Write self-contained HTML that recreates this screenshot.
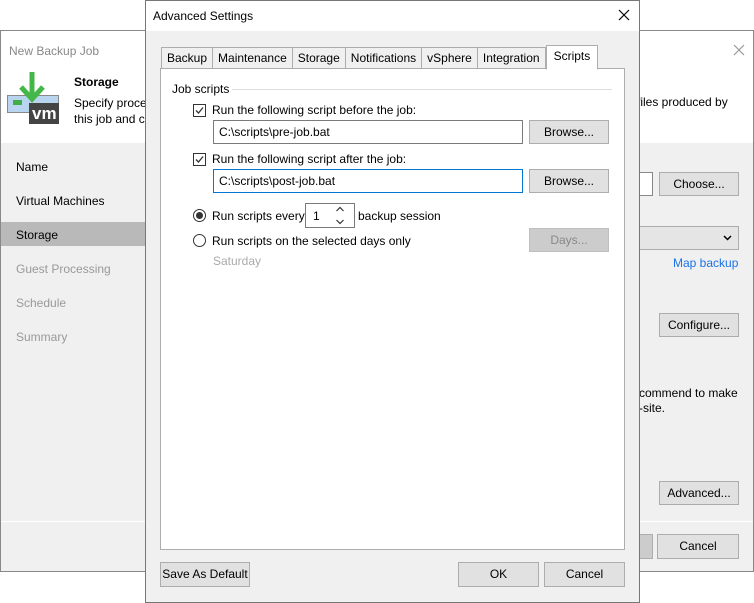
<!DOCTYPE html>
<html><head><style>
*{box-sizing:border-box;margin:0;padding:0}
body{width:754px;height:603px;background:#fff;font-family:"Liberation Sans",sans-serif;font-size:12px;color:#000;position:relative;overflow:hidden}
.a{position:absolute}
.btn{position:absolute;background:#e1e1e1;border:1px solid #adadad;text-align:center;line-height:23px;font-size:12px}
.gray{color:#999}
</style></head><body>
<!-- background window -->
<div class="a" style="left:0;top:30px;width:754px;height:542px;border:1px solid #888;background:#f0f0f0"></div>
<div class="a" style="left:1px;top:31px;width:752px;height:112px;background:#fff"></div>
<div class="a gray" style="left:9px;top:44px;font-size:12px;color:#888">New Backup Job</div>
<svg class="a" style="left:733px;top:44px" width="12" height="12"><path d="M1 1L11 11M11 1L1 11" stroke="#999" stroke-width="1.2"/></svg>
<svg class="a" style="left:0;top:40px" width="64" height="90">
<rect x="7.5" y="55.5" width="51" height="17" fill="#b8d4ee" stroke="#888"/>
<rect x="13" y="60" width="9" height="5" fill="#3fae49"/>
<rect x="29" y="63" width="30" height="21" fill="#444"/>
<text x="32" y="79" fill="#fff" font-size="17" font-weight="bold" font-family="Liberation Sans">vm</text>
<path d="M32 32v26M21 47l11 12 11-12" stroke="#45b749" stroke-width="5" fill="none"/>
</svg>
<div class="a" style="left:74px;top:75px;font-weight:bold">Storage</div>
<div class="a" style="left:74px;top:95px;line-height:16px">Specify proce<br>this job and c</div>
<div class="a" style="left:637px;top:95px">files produced by</div>
<div class="a" style="left:16px;top:160px">Name</div>
<div class="a" style="left:16px;top:194px">Virtual Machines</div>
<div class="a" style="left:1px;top:222px;width:144px;height:24px;background:#b9b9b9"></div>
<div class="a" style="left:16px;top:228px">Storage</div>
<div class="a gray" style="left:16px;top:262px">Guest Processing</div>
<div class="a gray" style="left:16px;top:296px">Schedule</div>
<div class="a gray" style="left:16px;top:330px">Summary</div>
<div class="a" style="left:630px;top:172px;width:23px;height:24px;border:1px solid #888;background:#fff"></div>
<div class="btn" style="left:659px;top:172px;width:80px;height:24px">Choose...</div>
<div class="a" style="left:630px;top:226px;width:109px;height:24px;border:1px solid #adadad;background:#e5e5e5"></div>
<svg class="a" style="left:723px;top:235px" width="9" height="6"><path d="M1 1l3.5 3.5L8 1" stroke="#000" stroke-width="1.5" fill="none"/></svg>
<div class="a" style="left:673px;top:256px;color:#1a73e8">Map backup</div>
<div class="btn" style="left:659px;top:313px;width:80px;height:24px">Configure...</div>
<div class="a" style="left:639px;top:386px;line-height:15px">commend to make<br>-site.</div>
<div class="btn" style="left:659px;top:481px;width:80px;height:24px">Advanced...</div>
<div class="a" style="left:1px;top:521px;width:752px;height:1px;background:#fff"></div>
<div class="btn" style="left:630px;top:534px;width:23px;height:25px;background:#ccc"></div>
<div class="btn" style="left:657px;top:534px;width:82px;height:25px">Cancel</div>
<!-- dialog -->
<div class="a" style="left:145px;top:0;width:495px;height:603px;border:1px solid #777;background:#f0f0f0"></div>
<div class="a" style="left:146px;top:1px;width:493px;height:30px;background:#fff"></div>
<div class="a" style="left:153px;top:9px">Advanced Settings</div>
<svg class="a" style="left:618px;top:9px" width="12" height="12"><path d="M1 1L11 11M11 1L1 11" stroke="#000" stroke-width="1.2"/></svg>
<div class="a" style="left:160px;top:68px;width:465px;height:482px;border:1px solid #adadad;background:#fff"></div>
<div class="a" style="left:161px;top:47px;height:22px;display:flex;font-size:12px">
<div style="border:1px solid #adadad;padding:3px 5px;background:#f0f0f0">Backup</div>
<div style="border:1px solid #adadad;border-left:0;padding:3px 5px;background:#f0f0f0">Maintenance</div>
<div style="border:1px solid #adadad;border-left:0;padding:3px 5px;background:#f0f0f0">Storage</div>
<div style="border:1px solid #adadad;border-left:0;padding:3px 5px;background:#f0f0f0">Notifications</div>
<div style="border:1px solid #adadad;border-left:0;padding:3px 5px;background:#f0f0f0">vSphere</div>
<div style="border:1px solid #adadad;border-left:0;padding:3px 5px;background:#f0f0f0">Integration</div>
<div style="border:1px solid #adadad;border-bottom:1px solid #fff;padding:3px 7px;background:#fff;margin-top:-2px;height:25px">Scripts</div>
</div>
<div class="a" style="left:172px;top:82px">Job scripts</div>
<div class="a" style="left:232px;top:89px;width:380px;height:1px;background:#ddd"></div>
<svg class="a" style="left:193px;top:104px" width="13" height="13"><rect x=".5" y=".5" width="12" height="12" fill="#fff" stroke="#333"/><path d="M3 6.5l2.5 2.5L10 3.5" stroke="#333" stroke-width="1.3" fill="none"/></svg>
<div class="a" style="left:212px;top:103px">Run the following script before the job:</div>
<div class="a" style="left:213px;top:120px;width:310px;height:24px;border:1px solid #7a7a7a;padding:4px 5px">C:\scripts\pre-job.bat</div>
<div class="btn" style="left:529px;top:120px;width:80px;height:24px">Browse...</div>
<svg class="a" style="left:193px;top:153px" width="13" height="13"><rect x=".5" y=".5" width="12" height="12" fill="#fff" stroke="#333"/><path d="M3 6.5l2.5 2.5L10 3.5" stroke="#333" stroke-width="1.3" fill="none"/></svg>
<div class="a" style="left:212px;top:152px">Run the following script after the job:</div>
<div class="a" style="left:213px;top:169px;width:310px;height:24px;border:1px solid #0078d7;padding:4px 5px">C:\scripts\post-job.bat</div>
<div class="btn" style="left:529px;top:169px;width:80px;height:24px">Browse...</div>
<div class="a" style="left:193px;top:209px;width:13px;height:13px;border:1px solid #333;border-radius:50%"><div style="width:7px;height:7px;background:#333;border-radius:50%;margin:2px"></div></div>
<div class="a" style="left:212px;top:209px">Run scripts every</div>
<div class="a" style="left:305px;top:203px;width:50px;height:25px;border:1px solid #7a7a7a;padding:5px 7px">1</div>
<svg class="a" style="left:335px;top:206px" width="10" height="19"><path d="M1.5 5L5 1.5 8.5 5M1.5 14L5 17.5 8.5 14" stroke="#333" stroke-width="1.2" fill="none"/></svg>
<div class="a" style="left:358px;top:209px">backup session</div>
<div class="a" style="left:193px;top:234px;width:13px;height:13px;border:1px solid #333;border-radius:50%"></div>
<div class="a" style="left:212px;top:234px">Run scripts on the selected days only</div>
<div class="btn" style="left:529px;top:228px;width:80px;height:24px;background:#ccc;border-color:#bfbfbf;color:#888">Days...</div>
<div class="a" style="left:213px;top:254px;color:#aaa">Saturday</div>
<div class="btn" style="left:160px;top:562px;width:90px;height:25px">Save As Default</div>
<div class="btn" style="left:458px;top:562px;width:81px;height:25px">OK</div>
<div class="btn" style="left:544px;top:562px;width:81px;height:25px">Cancel</div>
</body></html>
